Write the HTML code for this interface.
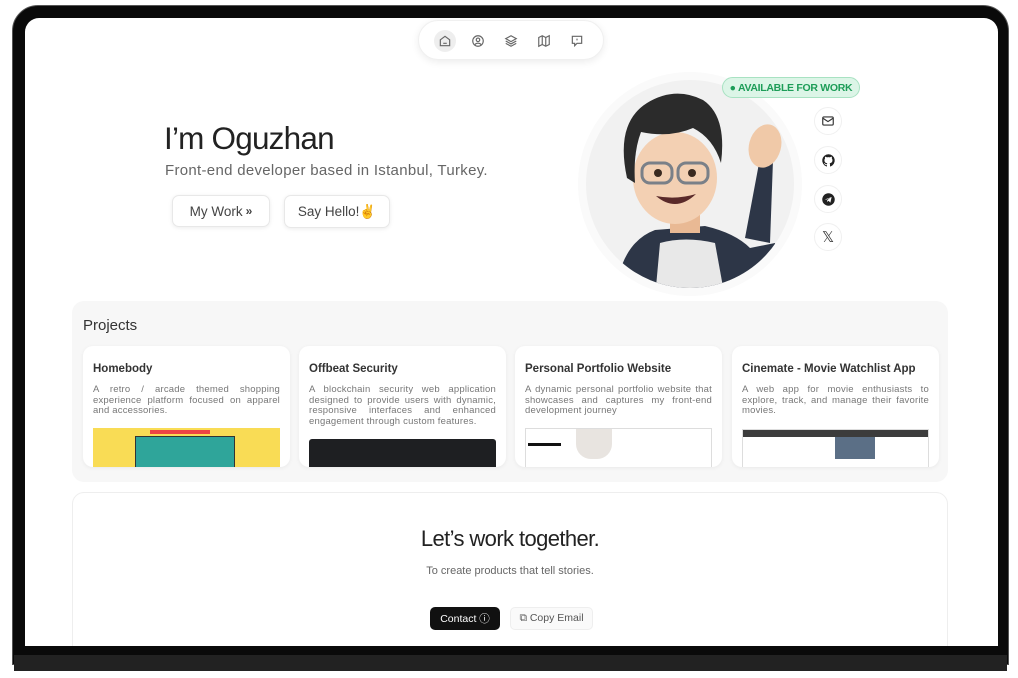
<!DOCTYPE html>
<html><head><meta charset="utf-8"><style>
*{box-sizing:border-box;margin:0;padding:0}
body{width:1018px;height:678px;background:#fff;position:relative;overflow:hidden;font-family:"Liberation Sans",sans-serif}
.abs{position:absolute}
.bezel{left:12px;top:5px;width:997px;height:660px;background:#0a0a0a;border-radius:26px 26px 0 0;border:1px solid #555}
.base{left:14px;top:655px;width:993px;height:16px;background:#222}
.screen{left:25px;top:18px;width:973px;height:628px;background:#fff;border-radius:14px 14px 0 0;overflow:hidden}
.nav{left:393px;top:2px;width:186px;height:40px;background:#fff;border-radius:20px;box-shadow:0 2px 8px rgba(0,0,0,.08);border:1px solid #f0f0f0}
.ni{position:absolute;top:9px;width:22px;height:22px;border-radius:11px;display:flex;align-items:center;justify-content:center}
.btn{position:absolute;background:#fff;border:1px solid #e8e8e8;border-radius:7px;box-shadow:0 1px 4px rgba(0,0,0,.08);font-size:13.5px;color:#444;display:flex;align-items:center;justify-content:center}
.soc{position:absolute;left:789px;width:28px;height:28px;border-radius:14px;background:#fff;border:1px solid #f0f0f0;display:flex;align-items:center;justify-content:center}
.card{position:absolute;top:45px;width:207px;height:121px;background:#fff;border-radius:10px;box-shadow:0 1px 4px rgba(0,0,0,.06);overflow:hidden;padding:0 10px}
.card h3{font-size:11.5px;color:#333;font-weight:bold;margin-top:17px;white-space:nowrap}
.card p{font-size:9.5px;color:#777;line-height:10.5px;text-align:justify;margin-top:10px;height:40px;letter-spacing:.2px}
.img{position:absolute;left:10px;width:187px;height:40px}
</style></head><body>
<div class="abs bezel"></div>
<div class="abs base"></div>
<div class="abs screen">
 <div class="abs nav">
  <div class="ni" style="left:15px;background:#eee"><svg width="14" height="14" viewBox="0 0 24 24" fill="none" stroke="#666" stroke-width="2"><path d="M4 10l8-6 8 6v10H4z"/><path d="M9 16h6"/></svg></div>
  <div class="ni" style="left:48px"><svg width="14" height="14" viewBox="0 0 24 24" fill="none" stroke="#666" stroke-width="2"><circle cx="12" cy="12" r="9"/><circle cx="12" cy="10" r="3"/><path d="M7 18c2-3 8-3 10 0"/></svg></div>
  <div class="ni" style="left:81px"><svg width="14" height="14" viewBox="0 0 24 24" fill="none" stroke="#666" stroke-width="2"><path d="M12 3l9 5-9 5-9-5z"/><path d="M3 12l9 5 9-5M3 16l9 5 9-5"/></svg></div>
  <div class="ni" style="left:114px"><svg width="14" height="14" viewBox="0 0 24 24" fill="none" stroke="#666" stroke-width="2"><path d="M3 6l6-3 6 3 6-3v15l-6 3-6-3-6 3z"/><path d="M9 3v15M15 6v15"/></svg></div>
  <div class="ni" style="left:147px"><svg width="14" height="14" viewBox="0 0 24 24" fill="none" stroke="#666" stroke-width="2"><path d="M4 4h16v12h-8l-4 4v-4H4z"/><path d="M12 8v3"/></svg></div>
 </div>
 <div class="abs" style="left:139px;top:102px;font-size:31.5px;color:#222;letter-spacing:-.8px">I’m Oguzhan</div>
 <div class="abs" style="left:140px;top:144px;font-size:15px;color:#666;letter-spacing:.3px">Front-end developer based in Istanbul, Turkey.</div>
 <div class="btn" style="left:147px;top:177px;width:98px;height:32px">My Work <b style="margin-left:3px;font-size:12px">»</b></div>
 <div class="btn" style="left:259px;top:177px;width:106px;height:33px">Say Hello!✌</div>

 <svg class="abs" style="left:550px;top:50px" width="240" height="240" viewBox="0 0 240 240">
  <circle cx="115" cy="116" r="112" fill="#fafafa"/>
  <circle cx="115" cy="116" r="104" fill="#f1f1f1"/>
  <clipPath id="c"><circle cx="115" cy="116" r="104"/></clipPath>
  <g clip-path="url(#c)">
   <path d="M40 230 Q45 175 80 162 L130 158 Q160 165 175 180 L200 175 L205 200 L175 215 L170 230Z" fill="#2d3647"/>
   <path d="M80 230 L85 175 Q110 168 140 175 L150 230Z" fill="#e8e8e8"/>
   <path d="M170 170 L185 90 L198 92 L195 175Z" fill="#2d3647"/>
   <ellipse cx="190" cy="78" rx="16" ry="22" fill="#f0c9a8" transform="rotate(15 190 78)"/>
   <rect x="95" y="135" width="30" height="30" fill="#e9b994"/>
   <ellipse cx="100" cy="110" rx="42" ry="46" fill="#f3d0b3"/>
   <path d="M52 110 Q40 55 72 35 Q100 18 128 32 Q152 48 146 95 Q138 70 118 60 Q95 70 66 64 Q58 85 60 115Z" fill="#2b2b2b"/>
   <rect x="67" y="95" width="30" height="20" rx="8" fill="none" stroke="#7a8088" stroke-width="3"/>
   <rect x="103" y="95" width="30" height="20" rx="8" fill="none" stroke="#7a8088" stroke-width="3"/>
   <circle cx="83" cy="105" r="4" fill="#3a2a20"/><circle cx="117" cy="105" r="4" fill="#3a2a20"/>
   <path d="M81 128 Q101 145 121 126 Q101 132 81 128Z" fill="#5a2a2a"/>
  </g>
 </svg>
 <div class="abs" style="left:697px;top:59px;width:138px;height:21px;border-radius:11px;background:#dcf5e7;border:1.5px solid #a8e2c2;color:#1d9d58;font-size:10.5px;font-weight:bold;display:flex;align-items:center;justify-content:center;letter-spacing:-.3px">● AVAILABLE FOR WORK</div>
 <div class="soc" style="top:89px"><svg width="14" height="14" viewBox="0 0 24 24" fill="none" stroke="#333" stroke-width="2"><rect x="3" y="5" width="18" height="14" rx="2"/><path d="M3 7l9 6 9-6"/></svg></div>
 <div class="soc" style="top:128px"><svg width="15" height="15" viewBox="0 0 24 24" fill="#222"><path d="M12 2a10 10 0 0 0-3.2 19.5c.5.1.7-.2.7-.5v-1.7c-2.8.6-3.4-1.3-3.4-1.3-.5-1.2-1.1-1.5-1.1-1.5-.9-.6.1-.6.1-.6 1 .1 1.5 1 1.5 1 .9 1.5 2.3 1.1 2.9.8.1-.6.3-1.1.6-1.3-2.2-.3-4.6-1.1-4.6-5 0-1.1.4-2 1-2.7-.1-.3-.4-1.3.1-2.7 0 0 .8-.3 2.8 1a9.4 9.4 0 0 1 5 0c1.9-1.3 2.8-1 2.8-1 .5 1.4.2 2.4.1 2.7.6.7 1 1.6 1 2.7 0 3.9-2.3 4.7-4.6 4.9.4.3.7.9.7 1.9V21c0 .3.2.6.7.5A10 10 0 0 0 12 2z"/></svg></div>
 <div class="soc" style="top:167px"><svg width="15" height="15" viewBox="0 0 24 24"><circle cx="12" cy="12" r="10" fill="#222"/><path d="M6 12l11-4-2 9-3-3-2 2v-3l5-4-6 3z" fill="#fff"/></svg></div>
 <div class="soc" style="top:205px;font-size:15px;color:#333">𝕏</div>

 <div class="abs" style="left:47px;top:283px;width:876px;height:181px;background:#f7f7f7;border-radius:12px">
  <div class="abs" style="left:11px;top:16px;font-size:15px;color:#333">Projects</div>
  <div class="card" style="left:11px"><h3>Homebody</h3><p>A retro / arcade themed shopping experience platform focused on apparel and accessories.</p>
   <div class="img" style="top:82px;background:#f9dc55"><div style="position:absolute;left:42px;top:8px;width:100px;height:32px;background:#2fa59a;border:1px solid #333"></div><div style="position:absolute;left:57px;top:2px;width:60px;height:4px;background:#e44"></div></div></div>
  <div class="card" style="left:227px"><h3>Offbeat Security</h3><p>A blockchain security web application designed to provide users with dynamic, responsive interfaces and enhanced engagement through custom features.</p>
   <div class="img" style="top:93px;background:#1e1f22;border-radius:3px"></div></div>
  <div class="card" style="left:443px"><h3>Personal Portfolio Website</h3><p>A dynamic personal portfolio website that showcases and captures my front-end development journey</p>
   <div class="img" style="top:82px;background:#fff;border:1px solid #ddd"><div style="position:absolute;left:2px;top:14px;width:33px;height:3px;background:#111"></div><div style="position:absolute;left:50px;top:0;width:36px;height:30px;background:#e8e4e0;border-radius:0 0 15px 15px"></div></div></div>
  <div class="card" style="left:660px"><h3>Cinemate - Movie Watchlist App</h3><p>A web app for movie enthusiasts to explore, track, and manage their favorite movies.</p>
   <div class="img" style="top:83px;background:#fff;border:1px solid #ddd"><div style="height:7px;background:#3c3c3c"></div><div style="position:absolute;left:92px;top:7px;width:40px;height:22px;background:#5b6f86"></div></div></div>
 </div>

 <div class="abs" style="left:47px;top:474px;width:876px;height:170px;background:#fff;border:1px solid #eee;border-radius:12px">
  <div class="abs" style="left:0;width:100%;top:33px;text-align:center;font-size:22px;color:#222;letter-spacing:-.6px">Let’s work together.</div>
  <div class="abs" style="left:0;width:100%;top:72px;text-align:center;font-size:11px;color:#666">To create products that tell stories.</div>
  <div class="abs" style="left:357px;top:114px;width:70px;height:23px;background:#111;border-radius:5px;color:#fff;font-size:10.5px;display:flex;align-items:center;justify-content:center">Contact ⓘ</div>
  <div class="abs" style="left:437px;top:114px;width:83px;height:23px;background:#fafafa;border:1px solid #eee;border-radius:5px;color:#555;font-size:10.5px;display:flex;align-items:center;justify-content:center">⧉ Copy Email</div>
 </div>
</div>
</body></html>
